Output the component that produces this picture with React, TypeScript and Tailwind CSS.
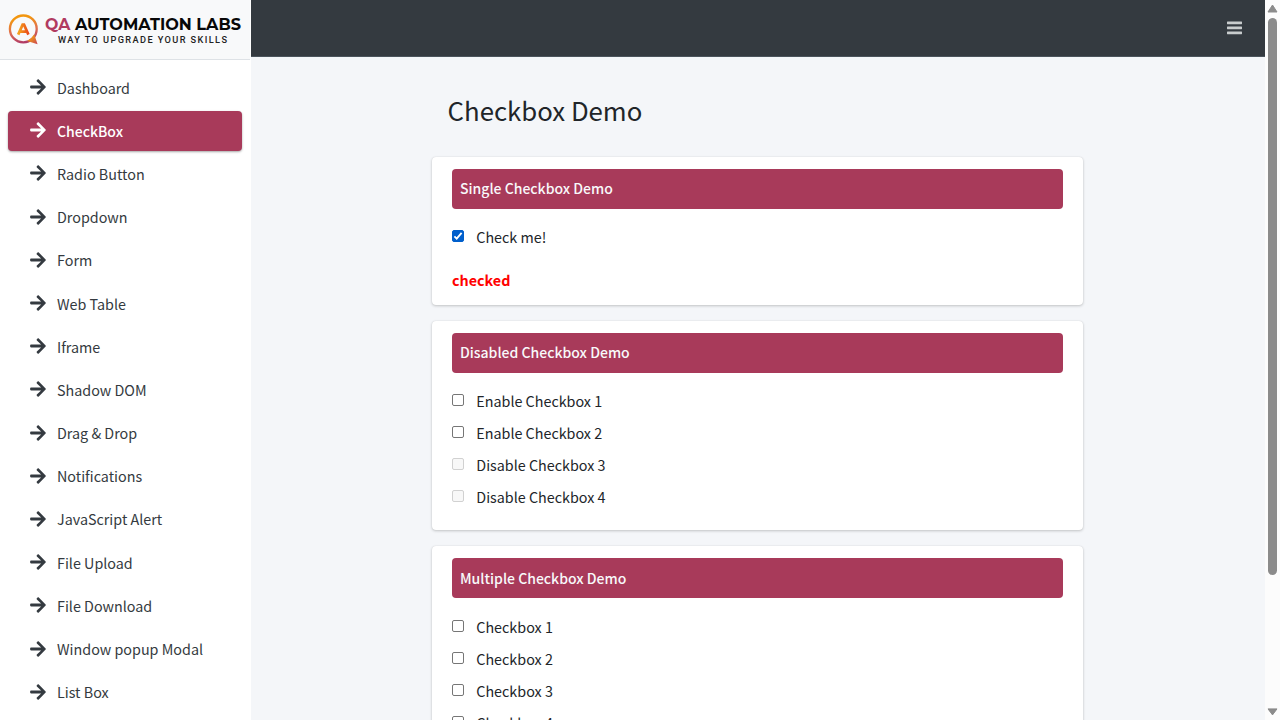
import { FaArrowRight } from "react-icons/fa";

const navItems = [
  "Dashboard", "CheckBox", "Radio Button", "Dropdown", "Form", "Web Table", "Iframe", "Shadow DOM",
  "Drag & Drop", "Notifications", "JavaScript Alert", "File Upload", "File Download", "Window popup Modal", "List Box",
];

function Logo() {
  return (
    <svg width="250" height="59" viewBox="0 0 250 59" className="block" role="img" aria-label="QA Automation Labs">
      <defs>
        <linearGradient id="ring" x1="0.4" y1="0" x2="0.6" y2="1">
          <stop offset="0.1" stopColor="#f2960f" />
          <stop offset="0.55" stopColor="#e0704f" />
          <stop offset="1" stopColor="#b03a66" />
        </linearGradient>
        <linearGradient id="letter" x1="0" y1="0" x2="1" y2="0">
          <stop offset="0.1" stopColor="#f5a01c" />
          <stop offset="1" stopColor="#ea4a1a" />
        </linearGradient>
        <linearGradient id="tail" x1="0" y1="0" x2="1" y2="1">
          <stop offset="0.3" stopColor="#f39a12" />
          <stop offset="1" stopColor="#c8435a" />
        </linearGradient>
      </defs>
      <circle cx="23.3" cy="28.9" r="13.4" fill="none" stroke="url(#ring)" strokeWidth="2.3" />
      <path d="M34.2 34.2 L37.6 44.2 L27.2 41 Q31.5 38.8 34.2 34.2Z" fill="url(#tail)" />
      <path d="M18.2 34.6 L22.6 24.6 H24 L28.4 34.6 M20.4 31.6 H26" fill="none" stroke="url(#letter)" strokeWidth="2.7" />
      <g fontFamily="Montserrat, Inter, sans-serif" fontSize="16.6" fontWeight="700">
        <text x="45" y="30.4" textLength="25.3" lengthAdjust="spacingAndGlyphs" fill="#b13b60">QA</text>
        <text x="75" y="30.4" textLength="166" lengthAdjust="spacingAndGlyphs" fill="#080808">AUTOMATION LABS</text>
      </g>
      <text x="58" y="42.6" textLength="169" fontFamily="Roboto, sans-serif" fontSize="9.2" fontWeight="500" fill="#222">WAY TO UPGRADE YOUR SKILLS</text>
    </svg>
  );
}

function Check({ label, checked = false, disabled = false }: { label: string; checked?: boolean; disabled?: boolean }) {
  return (
    <label className="mb-2 flex h-6 items-center">
      <span
        className={
          "mr-3 -mt-[2px] flex size-3 shrink-0 items-center justify-center rounded-[2px] border " +
          (checked ? "border-[#005fcc] bg-[#005fcc]" : disabled ? "border-[#d1d1d1] bg-[#f8f8f8]" : "border-[#767676] bg-white")
        }
      >
        {checked && (
          <svg viewBox="0 0 12 12" className="size-3 shrink-0">
            <path d="M2.4 6.3 L4.7 8.6 L9.6 2.8" fill="none" stroke="#fff" strokeWidth="1.8" />
          </svg>
        )}
      </span>
      <span className="pt-px pl-[0.7px]">{label}</span>
    </label>
  );
}

function Card({ title, className, children }: { title: string; className: string; children: React.ReactNode }) {
  return (
    <section className={"mb-4 shrink-0 rounded bg-white px-5 pt-3 shadow-[0_0_1px_rgba(0,0,0,.125),0_1px_3px_rgba(0,0,0,.2)] " + className}>
      <h2 className="mb-4 flex h-10 items-center rounded bg-[#a83a5a] pb-[0.6px] pl-[8.4px] text-[14.02px] font-medium text-[#f8f9fa]">{title}</h2>
      {children}
    </section>
  );
}

export default function App() {
  return (
    <div className="flex h-[720px] w-[1280px] overflow-hidden bg-[#f4f6f9] font-['Noto_Sans_CJK_JP',sans-serif] text-[14.33px] leading-6 text-[#212529]">
      <aside className="flex w-[250.6px] shrink-0 flex-col bg-white">
        <div className="h-[60px] w-[250px] shrink-0 border-b border-[#dee2e6] bg-[#f8f9fa]"><Logo /></div>
        <nav className="flex flex-col gap-[3.2px] px-2 pt-[7.6px]">
          {navItems.map((item, i) => (
            <a
              key={item}
              className={
                "flex h-10 shrink-0 items-center rounded pl-[22px] " +
                (i === 1 ? "mr-[0.3px] bg-[#a83a5a] text-[14.02px] font-medium text-white shadow-[0_1px_3px_rgba(0,0,0,.12),0_1px_2px_rgba(0,0,0,.24)]" : "text-[#343a40]")
              }
            >
              <FaArrowRight className="mr-[11px] -mt-px h-[18px] w-4" />
              <span>{item}</span>
            </a>
          ))}
        </nav>
      </aside>
      <main className="flex w-[1014.4px] shrink-0 flex-col">
        <header className="flex h-[57px] shrink-0 items-center justify-end border-b border-[#4b545c] bg-[#343a40] pr-[23px]">
          <svg viewBox="0 0 15 14" className="h-3.5 w-[15px] fill-[#c8cccd]">
            <rect y="0.5" width="15" height="2.7" rx="0.4" />
            <rect y="5.5" width="15" height="2.7" rx="0.4" />
            <rect y="10.5" width="15" height="2.7" rx="0.4" />
          </svg>
        </header>
        <div className="ml-[181px] flex w-[651.4px] flex-col">
          <h1 className="mb-[29.6px] mt-[35px] pl-4 text-[25.75px] leading-[35px]">Checkbox Demo</h1>
          <Card title="Single Checkbox Demo" className="h-[148px]">
            <Check label="Check me!" checked />
            <p className="mt-[19px] pl-[0.4px] font-bold text-[#ff0000]">checked</p>
          </Card>
          <Card title="Disabled Checkbox Demo" className="h-[209.6px]">
            <Check label="Enable Checkbox 1" />
            <Check label="Enable Checkbox 2" />
            <Check label="Disable Checkbox 3" disabled />
            <Check label="Disable Checkbox 4" disabled />
          </Card>
          <Card title="Multiple Checkbox Demo" className="h-[260px]">
            <div className="pt-[0.5px]">
              <Check label="Checkbox 1" />
              <Check label="Checkbox 2" />
              <Check label="Checkbox 3" />
              <Check label="Checkbox 4" />
            </div>
          </Card>
        </div>
      </main>
      <div className="flex w-[15px] shrink-0 flex-col items-center bg-[#fcfcfc] pb-1 pt-1">
        <svg width="11" height="9" viewBox="0 0 11 9" className="shrink-0"><path d="M5.5 1 L10 8 H1Z" fill="#8b8b8b" stroke="#8b8b8b" strokeLinejoin="round" /></svg>
        <div className="mb-auto mt-[5px] h-[557px] w-[9px] shrink-0 rounded-full bg-[#8b8b8b]" />
        <svg width="11" height="9" viewBox="0 0 11 9" className="shrink-0"><path d="M5.5 7.9 L10 1.9 H1Z" fill="#8b8b8b" stroke="#8b8b8b" strokeLinejoin="round" /></svg>
      </div>
    </div>
  );
}
